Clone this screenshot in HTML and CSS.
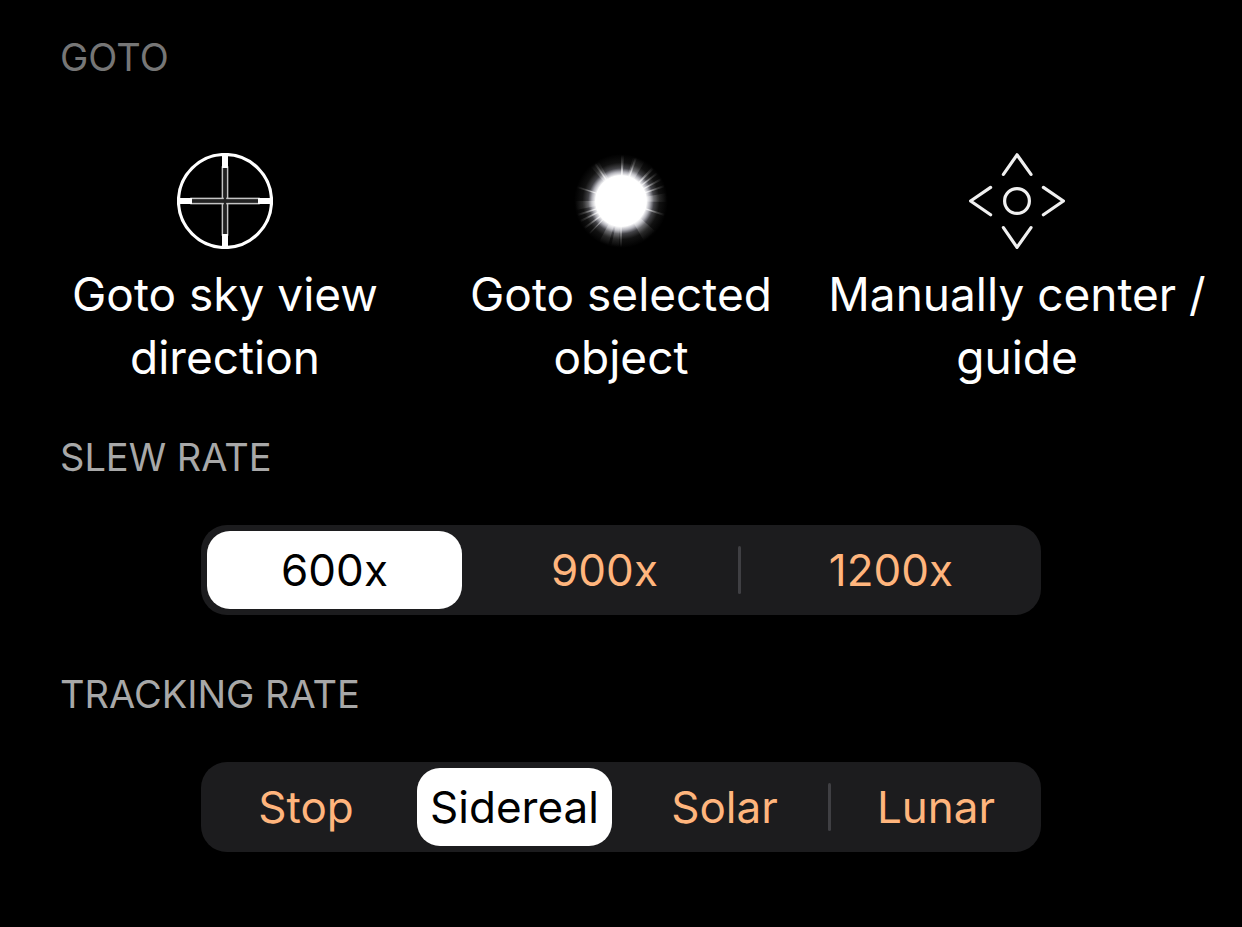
FILE: index.html
```html
<!DOCTYPE html>
<html lang="en">
<head>
    <meta charset="UTF-8">
    <meta name="viewport" content="width=device-width, initial-scale=1.0">
    <title>Telescope control</title>
    <link rel="stylesheet" href="styles.css">
</head>
<body>
    <main class="panel">
        <section class="goto">
            <h2 class="title title-dim">GOTO</h2>
            <div class="actions">
                <button type="button" class="action">
                    <svg class="icon" viewBox="0 0 96 96" aria-hidden="true">
                        <g fill="#222" stroke="#c4c4c4" stroke-width="1.5">
                            <rect x="45.4" y="14" width="5.2" height="68"/>
                            <rect x="14" y="45.4" width="68" height="5.2"/>
                        </g>
                        <path d="M48 14V82" stroke="#222" stroke-width="2.4"/>
                        <path d="M48 2V15M48 81V94M2 48H15M81 48H94" stroke="#fff" stroke-width="6"/>
                        <circle cx="48" cy="48" r="46.5" fill="none" stroke="#fff" stroke-width="3.2"/>
                    </svg>
                    <span>Goto sky view direction</span>
                </button>
                <button type="button" class="action">
                    <svg class="icon" viewBox="0 0 96 96" aria-hidden="true">
                        <defs>
                            <radialGradient id="glow" gradientUnits="userSpaceOnUse" cx="48" cy="48" r="47">
                                <stop offset="0" stop-color="#fff"/>
                                <stop offset="0.54" stop-color="#fff"/>
                                <stop offset="0.62" stop-color="#f0f0fa" stop-opacity="0.72"/>
                                <stop offset="0.7" stop-color="#e0e0ee" stop-opacity="0.3"/>
                                <stop offset="0.82" stop-color="#ddd" stop-opacity="0.08"/>
                                <stop offset="1" stop-color="#ccc" stop-opacity="0"/>
                            </radialGradient>
                            <radialGradient id="ray" gradientUnits="userSpaceOnUse" cx="48" cy="48" r="46">
                                <stop offset="0.5" stop-color="#fff"/>
                                <stop offset="0.65" stop-color="#fff" stop-opacity="0.6"/>
                                <stop offset="0.8" stop-color="#fff" stop-opacity="0.22"/>
                                <stop offset="1" stop-color="#fff" stop-opacity="0"/>
                            </radialGradient>
                        </defs>
                        <circle cx="48" cy="48" r="47" fill="url(#glow)"/>
                        <!-- wide soft rays -->
                        <g fill="url(#ray)" opacity="0.5">
                            <path d="M48 48L60 4L72 8Z"/>
                            <path d="M48 48L18 14L26 9Z"/>
                            <path d="M48 48L2 48L3 57Z"/>
                            <path d="M48 48L26 89L35 93Z"/>
                            <path d="M48 48L38 94L46 95Z"/>
                            <path d="M48 48L71 88L82 78Z"/>
                            <path d="M48 48L94 40L94 49Z"/>
                        </g>
                        <!-- thin bright rays -->
                        <g fill="url(#ray)">
                            <path d="M48 48L48 1L51 1Z"/>
                            <path d="M48 48L47 95L49 95Z"/>
                            <path d="M48 48L4 33L4 35Z"/>
                            <path d="M48 48L92 61L91 63Z"/>
                            <path d="M48 48L79 14L81 16Z"/>
                            <path d="M48 48L84 19L85 21Z"/>
                            <path d="M48 48L88 25L89 27Z"/>
                            <path d="M48 48L91 32L92 34Z"/>
                            <path d="M48 48L62 4L64 5Z"/>
                            <path d="M48 48L21 11L23 10Z"/>
                            <path d="M48 48L4 61L5 63Z"/>
                            <path d="M48 48L7 67L8 69Z"/>
                            <path d="M48 48L11 74L12 76Z"/>
                            <path d="M48 48L16 80L17 81Z"/>
                        </g>
                    </svg>
                    <span>Goto selected object</span>
                </button>
                <button type="button" class="action">
                    <svg class="icon" viewBox="0 0 96 96" fill="none" stroke="#f0f0f0" stroke-width="3.2" stroke-linecap="round" stroke-linejoin="round" aria-hidden="true">
                        <path d="M34.4 21.4L48 1.8L62 21.4"/>
                        <path d="M34.4 74.6L48 94.4L62 74.6"/>
                        <path d="M21.6 34.4L1.6 48L21.6 61.8"/>
                        <path d="M74.4 34.4L94.4 48L74.4 61.8"/>
                        <circle cx="48" cy="48" r="12.4"/>
                    </svg>
                    <span>Manually center / guide</span>
                </button>
            </div>
        </section>

        <section class="rate">
            <h2 class="title" id="slew">SLEW RATE</h2>
            <div class="segments segments-slew" role="radiogroup" aria-labelledby="slew">
                <label class="segment"><input type="radio" name="slew" checked><span>600x</span></label>
                <label class="segment"><input type="radio" name="slew"><span>900x</span></label>
                <label class="segment divided"><input type="radio" name="slew"><span>1200x</span></label>
            </div>
        </section>

        <section class="rate">
            <h2 class="title" id="tracking">TRACKING RATE</h2>
            <div class="segments segments-tracking" role="radiogroup" aria-labelledby="tracking">
                <label class="segment"><input type="radio" name="tracking"><span>Stop</span></label>
                <label class="segment"><input type="radio" name="tracking" checked><span>Sidereal</span></label>
                <label class="segment"><input type="radio" name="tracking"><span>Solar</span></label>
                <label class="segment divided"><input type="radio" name="tracking"><span>Lunar</span></label>
            </div>
        </section>
    </main>
</body>
</html>
```

FILE: styles.css
```css
* {
    box-sizing: border-box;
}

body {
    margin: 0;
    background: #000;
    color: #fff;
    font-family: Inter, "Liberation Sans", sans-serif;
}

.panel {
    padding: 33px 0 72px;
}

.title {
    margin: 0;
    padding: 0 60px;
    color: #a8a8a8;
    font-size: 38px;
    font-weight: 400;
    line-height: 48px;
}

.title-dim {
    color: #767676;
}

/* goto buttons */
.actions {
    display: grid;
    grid-template-columns: repeat(3, 1fr);
    padding: 72px 27px 0;
}

.action {
    display: flex;
    flex-direction: column;
    align-items: center;
    gap: 14px;
    padding: 0;
    border: 0;
    background: none;
    color: inherit;
    font: inherit;
    font-size: 46px;
    line-height: 63px;
    cursor: pointer;
}

.icon {
    width: 96px;
    height: 96px;
}

/* segmented controls */
.rate {
    padding-top: 44px;
}

.rate + .rate {
    padding-top: 55px;
}

.segments {
    display: grid;
    width: 68%;
    max-width: 840px;
    margin: 44px auto 0;
    border-radius: 26px;
    background: #1c1c1e;
}

.segments-slew {
    grid-template-columns: 267fr 273fr 300fr;
}

.segments-tracking {
    grid-template-columns: 210fr 207fr 213fr 210fr;
}

.segment {
    position: relative;
    padding: 6px;
    color: #ffb57d;
    font-size: 44px;
    line-height: 78px;
    text-align: center;
    cursor: pointer;
}

.segment input {
    position: absolute;
    opacity: 0;
}

.segment span {
    display: block;
    border-radius: 23px;
}

.segment input:checked + span {
    background: #fff;
    color: #000;
}

.segment input:focus-visible + span {
    outline: 3px solid #ffb57d;
}

.divided::before {
    content: "";
    position: absolute;
    left: -3px;
    top: 21px;
    bottom: 21px;
    width: 3px;
    border-radius: 2px;
    background: #3f3f43;
}
```
